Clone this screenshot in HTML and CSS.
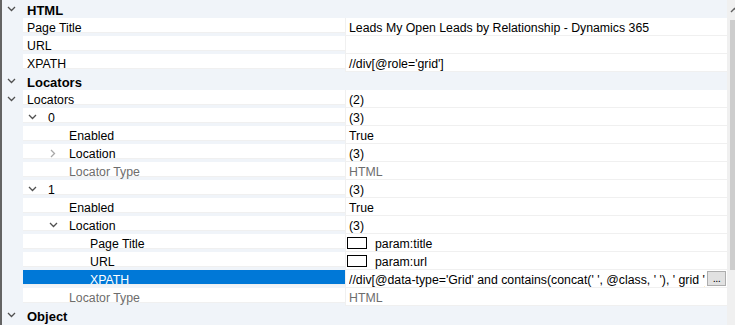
FILE: index.html
```html
<!DOCTYPE html>
<html lang="en">
<head>
  <meta charset="UTF-8">
  <title>Property Grid</title>
  <link rel="stylesheet" href="styles.css">
</head>
<body>
  <div class="panel">
    <div class="edge"></div>

    <div class="grid">
      <div class="row cat">
        <div class="gutter"></div>
        <div class="cat-name"><span class="twisty"><svg width="9" height="6" viewBox="0 0 9 6"><polyline points="1,1 4.5,4.5 8,1"/></svg></span>HTML</div>
      </div>
      <div class="row">
        <div class="gutter"></div>
        <div class="name">Page Title</div><div class="sep"></div>
        <div class="value">Leads My Open Leads by Relationship - Dynamics 365</div>
      </div>
      <div class="row">
        <div class="gutter"></div>
        <div class="name">URL</div><div class="sep"></div>
        <div class="value"></div>
      </div>
      <div class="row">
        <div class="gutter"></div>
        <div class="name">XPATH</div><div class="sep"></div>
        <div class="value">//div[@role='grid']</div>
      </div>

      <div class="row cat">
        <div class="gutter"></div>
        <div class="cat-name"><span class="twisty"><svg width="9" height="6" viewBox="0 0 9 6"><polyline points="1,1 4.5,4.5 8,1"/></svg></span>Locators</div>
      </div>
      <div class="row">
        <div class="gutter"></div>
        <div class="name"><span class="twisty"><svg width="9" height="6" viewBox="0 0 9 6"><polyline points="1,1 4.5,4.5 8,1"/></svg></span>Locators</div><div class="sep"></div>
        <div class="value">(2)</div>
      </div>
      <div class="row">
        <div class="gutter"></div>
        <div class="name l1"><span class="twisty"><svg width="9" height="6" viewBox="0 0 9 6"><polyline points="1,1 4.5,4.5 8,1"/></svg></span>0</div><div class="sep"></div>
        <div class="value">(3)</div>
      </div>
      <div class="row">
        <div class="gutter"></div>
        <div class="name l2">Enabled</div><div class="sep"></div>
        <div class="value">True</div>
      </div>
      <div class="row">
        <div class="gutter"></div>
        <div class="name l2"><span class="twisty closed"><svg width="6" height="9" viewBox="0 0 6 9"><polyline points="1,1 4.5,4.5 1,8"/></svg></span>Location</div><div class="sep"></div>
        <div class="value">(3)</div>
      </div>
      <div class="row">
        <div class="gutter"></div>
        <div class="name l2 muted">Locator Type</div><div class="sep"></div>
        <div class="value muted">HTML</div>
      </div>
      <div class="row">
        <div class="gutter"></div>
        <div class="name l1"><span class="twisty"><svg width="9" height="6" viewBox="0 0 9 6"><polyline points="1,1 4.5,4.5 8,1"/></svg></span>1</div><div class="sep"></div>
        <div class="value">(3)</div>
      </div>
      <div class="row">
        <div class="gutter"></div>
        <div class="name l2">Enabled</div><div class="sep"></div>
        <div class="value">True</div>
      </div>
      <div class="row">
        <div class="gutter"></div>
        <div class="name l2"><span class="twisty"><svg width="9" height="6" viewBox="0 0 9 6"><polyline points="1,1 4.5,4.5 8,1"/></svg></span>Location</div><div class="sep"></div>
        <div class="value">(3)</div>
      </div>
      <div class="row">
        <div class="gutter"></div>
        <div class="name l3">Page Title</div><div class="sep"></div>
        <div class="value"><span class="swatch"></span>param:title</div>
      </div>
      <div class="row">
        <div class="gutter"></div>
        <div class="name l3">URL</div><div class="sep"></div>
        <div class="value"><span class="swatch"></span>param:url</div>
      </div>
      <div class="row selected">
        <div class="gutter"></div>
        <div class="name l3">XPATH</div><div class="sep"></div>
        <div class="value">
          <span class="clip">//div[@data-type='Grid' and contains(concat(' ', @class, ' '), ' grid ')]</span>
          <span class="dots">...</span>
        </div>
      </div>
      <div class="row">
        <div class="gutter"></div>
        <div class="name l2 muted">Locator Type</div><div class="sep"></div>
        <div class="value muted">HTML</div>
      </div>

      <div class="row cat">
        <div class="gutter"></div>
        <div class="cat-name"><span class="twisty"><svg width="9" height="6" viewBox="0 0 9 6"><polyline points="1,1 4.5,4.5 8,1"/></svg></span>Object</div>
      </div>
      <div class="row cat"></div>
    </div>

    <div class="vscroll">
      <div class="arrow"><svg width="9" height="6" viewBox="0 0 9 6"><polyline points="1,5 4.5,1.5 8,5"/></svg></div>
      <div class="thumb"></div>
    </div>
  </div>
</body>
</html>
```

FILE: styles.css
```css
body {
  margin: 0;
  font-family: 'Liberation Sans', Arial, sans-serif;
  font-size: 12.3px;
  color: #000;
  background: #fff;
  overflow: hidden;
}

.panel {
  display: flex;
  height: 325px;
}

.edge {
  width: 2px;
  flex: none;
  background: #646464;
}

.grid {
  flex: 1;
  min-width: 0;
  background: #f0f4f9;
  overflow: hidden;
}

.row {
  display: flex;
  height: 18px;
}

.gutter {
  width: 21px;
  flex: none;
  background: #f0f4f9;
}

.name,
.value,
.cat-name {
  height: 15px;
  padding-top: 2px;
  line-height: 17px;
  white-space: nowrap;
}

.name {
  width: 322px;
  flex: none;
  box-sizing: border-box;
  padding-left: 4px;
  background: #fff;
  border-bottom: 1px solid #f0f0f0;
}

.name.l1 { padding-left: 25px; }
.name.l2 { padding-left: 46px; }
.name.l3 { padding-left: 67px; }

.sep {
  width: 1px;
  flex: none;
  background: #f0f0f0;
}

.value {
  flex: 1;
  min-width: 0;
  display: flex;
  align-items: flex-start;
  padding-left: 3px;
  background: #fff;
  border-bottom: 1px solid #f0f0f0;
}

.cat-name {
  padding-left: 4px;
  font-size: 13px;
  font-weight: bold;
}

.muted {
  color: #6d6d6d;
}

.twisty {
  display: inline-block;
  width: 12px;
  height: 15px;
  margin-left: -22px;
  margin-right: 10px;
  vertical-align: top;
  text-align: center;
}

.twisty svg {
  display: block;
  margin: 4px auto 0;
  fill: none;
  stroke: #505050;
  stroke-width: 1.3;
}

.twisty.closed svg {
  margin-top: 3px;
  stroke: #a8a8a8;
}

.swatch {
  width: 18px;
  height: 10px;
  flex: none;
  margin: 1px 8px 0 -2px;
  border: 1px solid #000;
}

.selected .name {
  background: #0078d7;
  color: #fff;
}

.clip {
  flex: 1;
  min-width: 0;
  overflow: hidden;
}

.dots {
  width: 17px;
  height: 13px;
  flex: none;
  margin: -1px 1px 0 2px;
  border: 1px solid #adadad;
  background: #e1e1e1;
  color: #000;
  font-size: 11px;
  line-height: 12px;
  text-align: center;
  letter-spacing: -0.5px;
}

.vscroll {
  width: 8px;
  flex: none;
  background: #f0f0f0;
  display: flex;
  flex-direction: column;
}

.arrow {
  height: 20px;
  flex: none;
}

.arrow svg {
  display: block;
  margin: 7px 0 0 3px;
  fill: none;
  stroke: #606060;
  stroke-width: 1.4;
}

.thumb {
  height: 250px;
  margin-left: 3px;
  background: #cdcdcd;
}
```
